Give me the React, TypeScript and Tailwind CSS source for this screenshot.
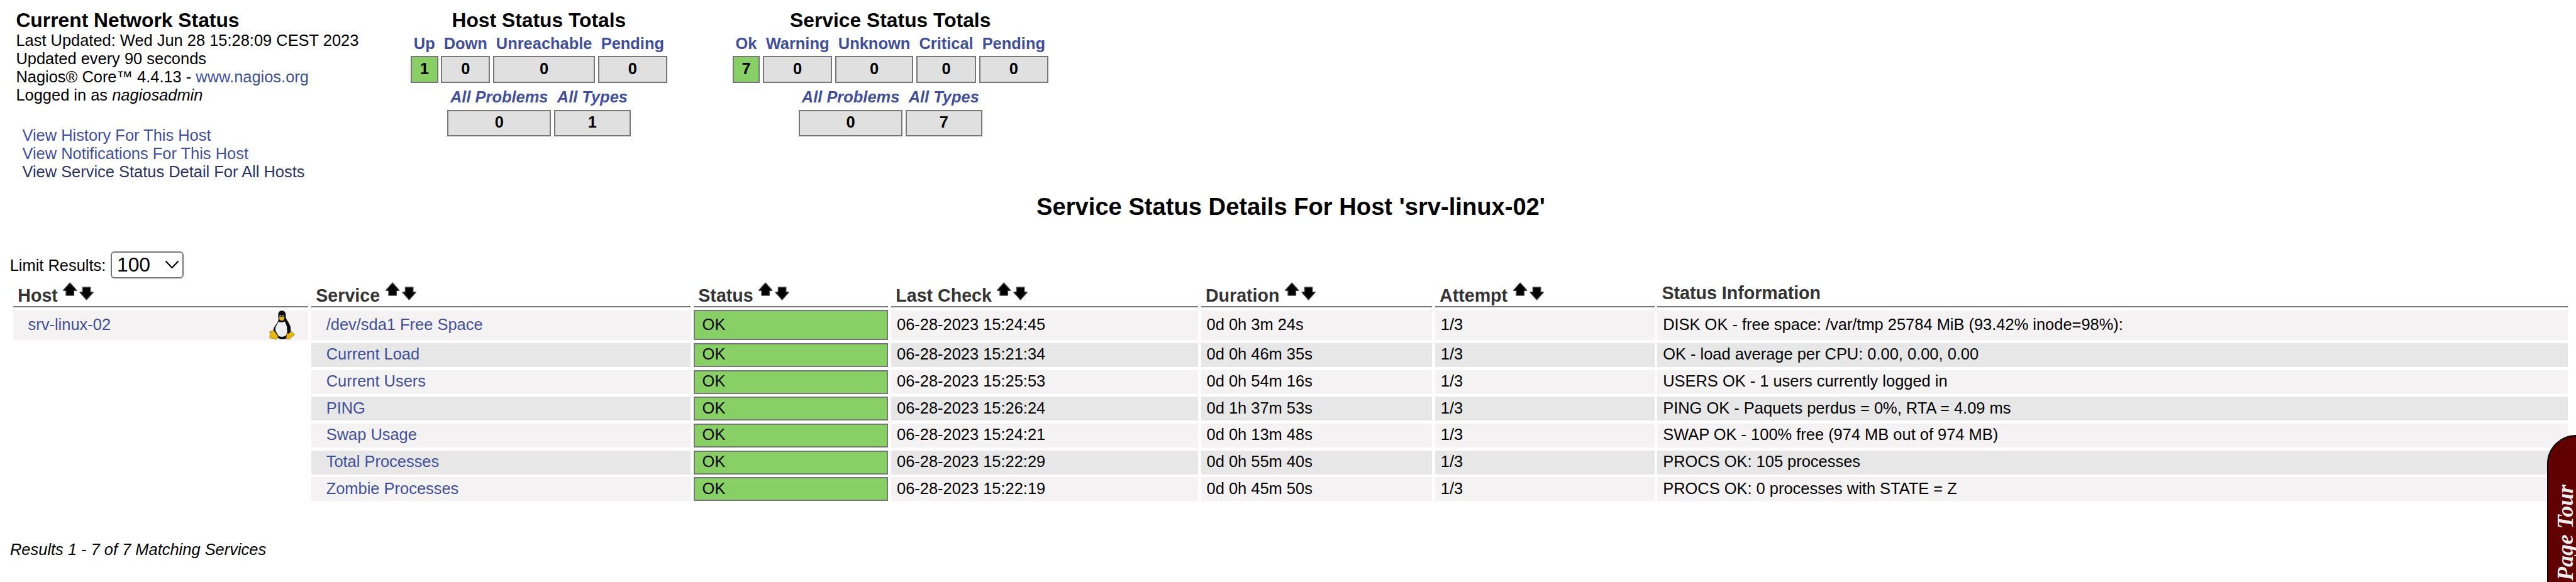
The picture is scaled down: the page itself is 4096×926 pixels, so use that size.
import React from "react";

type Total = { label: string; value: string; width: string; ok?: boolean };

const hostTotals: Total[] = [
  { label: "Up", value: "1", width: "w-[43.6px]", ok: true },
  { label: "Down", value: "0", width: "w-[78.2px]" },
  { label: "Unreachable", value: "0", width: "w-[162.4px]" },
  { label: "Pending", value: "0", width: "w-[109.8px]" },
];
const serviceTotals: Total[] = [
  { label: "Ok", value: "7", width: "w-[43.6px]", ok: true },
  { label: "Warning", value: "0", width: "w-[110.3px]" },
  { label: "Unknown", value: "0", width: "w-[124.4px]" },
  { label: "Critical", value: "0", width: "w-[95.5px]" },
  { label: "Pending", value: "0", width: "w-[109.8px]" },
];
const sums = (types: string): Total[] => [
  { label: "All Problems", value: "0", width: "w-[165.4px]" },
  { label: "All Types", value: types, width: "w-[121.7px]" },
];

const columns = [
  { label: "Host", sortable: true },
  { label: "Service", sortable: true },
  { label: "Status", sortable: true },
  { label: "Last Check", sortable: true },
  { label: "Duration", sortable: true },
  { label: "Attempt", sortable: true },
  { label: "Status Information", sortable: false },
];

const services = [
  ["/dev/sda1 Free Space", "06-28-2023 15:24:45", "0d 0h 3m 24s", "DISK OK - free space: /var/tmp 25784 MiB (93.42% inode=98%):"],
  ["Current Load", "06-28-2023 15:21:34", "0d 0h 46m 35s", "OK - load average per CPU: 0.00, 0.00, 0.00"],
  ["Current Users", "06-28-2023 15:25:53", "0d 0h 54m 16s", "USERS OK - 1 users currently logged in"],
  ["PING", "06-28-2023 15:26:24", "0d 1h 37m 53s", "PING OK - Paquets perdus = 0%, RTA = 4.09 ms"],
  ["Swap Usage", "06-28-2023 15:24:21", "0d 0h 13m 48s", "SWAP OK - 100% free (974 MB out of 974 MB)"],
  ["Total Processes", "06-28-2023 15:22:29", "0d 0h 55m 40s", "PROCS OK: 105 processes"],
  ["Zombie Processes", "06-28-2023 15:22:19", "0d 0h 45m 50s", "PROCS OK: 0 processes with STATE = Z"],
];

const GRID = "grid grid-cols-[474px_608px_314px_492.6px_372.2px_353.4px_1452.6px]";

function TotalsRow({ items, italic }: { items: Total[]; italic?: boolean }) {
  return (
    <div className="flex justify-center gap-[4.6px]">
      {items.map((t) => (
        <div key={t.label} className={`${t.width} flex flex-col items-center font-bold`}>
          <a className={italic ? "italic text-[#3f4f9c] leading-[28px] whitespace-nowrap" : "text-[#3f4f9c] leading-[28px] whitespace-nowrap"}>{t.label}</a>
          <div
            className={`${t.ok ? "bg-[#88d066]" : "bg-[#e0e0e0]"} ${italic ? "h-[42px]" : "h-[43px]"} mt-[6.4px] w-full border-2 border-[#777] flex items-center justify-center pb-[1.6px]`}
          >
            {t.value}
          </div>
        </div>
      ))}
    </div>
  );
}

function Totals({ title, items, types }: { title: string; items: Total[]; types: string }) {
  return (
    <div className="flex flex-col">
      <h2 className="text-center text-[31.8px] leading-[36px] font-bold">{title}</h2>
      <div className="h-[4.6px]" />
      <TotalsRow items={items} />
      <div className="h-[8.4px]" />
      <TotalsRow items={sums(types)} italic />
    </div>
  );
}

function SortArrows() {
  return (
    <svg className="ml-[8.5px] mb-[9px] h-[29px] w-[49px] shrink-0" viewBox="0 0 49 29">
      <path d="M11.2 1 L21.6 12.6 V13.4 H17.4 V21 H5 V13.4 H0.8 V12.6 Z" fill="#000" stroke="#4a4a4a" strokeWidth="1.4" strokeLinejoin="round" />
      <path d="M37.6 28 L48 16.4 V15.6 H43.8 V8 H31.4 V15.6 H27.2 V16.4 Z" fill="#000" stroke="#4a4a4a" strokeWidth="1.4" strokeLinejoin="round" />
    </svg>
  );
}

function Tux() {
  return (
    <svg className="h-[46.6px] w-[40.6px]" viewBox="18 14 134 154">
      <path d="M85 15 C96 15 104 23 105 36 C105 47 106 56 113 67 C122 80 132 96 131 113 C131 124 128 134 122 142 C118 155 110 164 92 164 C74 165 62 161 56 152 L40 126 C38 112 46 97 55 87 C61 78 67 67 67 57 C65 45 64 34 68 25 C71 18 77 15 85 15 Z" fill="#0c0c0c" />
      <path d="M67 72 C74 78 94 77 99 71 C106 83 112 95 112 113 C114 128 112 142 103 148 C91 154 77 154 67 148 L52 122 C48 108 53 96 60 87 Z" fill="#eeeeee" />
      <path d="M72 44 C72 36 79 35 82 43 L81 50 H74 Z M85 44 C86 35 95 36 96 44 L94 51 H86 Z" fill="#b8b8b8" />
      <path d="M75 43 h4 v6 h-4z M88 43 h4 v6 h-4z" fill="#111" />
      <path d="M69 53 C75 45 92 45 99 53 C97 63 89 69 82 68 C76 67 70 61 69 53 Z" fill="#e6b412" />
      <path d="M22 124 C31 126 32 119 41 121 C49 126 56 138 63 148 C66 158 60 166 50 165 C40 161 30 161 22 158 C18 155 23 148 23 142 C22 136 20 129 22 124 Z" fill="#e8b50c" stroke="#7a5a08" strokeWidth="2" />
      <path d="M111 131 C115 139 124 138 132 122 C139 125 139 134 150 139 C153 144 143 149 134 155 C127 163 118 168 110 164 C105 158 111 148 111 131 Z" fill="#e8b50c" stroke="#7a5a08" strokeWidth="2" />
    </svg>
  );
}

export default function App() {
  return (
    <div className="relative flex h-[926px] w-[4096px] flex-col overflow-hidden bg-white font-['Liberation_Sans',Arial,sans-serif] text-[25.44px] leading-[29.07px] text-black">
      <header className="flex h-[300px] shrink-0 pt-[14px]">
        <div className="w-[653px] pl-[25.4px]">
          <h2 className="text-[31.8px] leading-[36px] font-bold">Current Network Status</h2>
          <div>Last Updated: Wed Jun 28 15:28:09 CEST 2023</div>
          <div>Updated every 90 seconds</div>
          <div>
            Nagios® Core™ 4.4.13 - <a className="text-[#3f4f9c]">www.nagios.org</a>
          </div>
          <div>
            Logged in as <i>nagiosadmin</i>
          </div>
          <nav className="mt-[34.3px] flex flex-col pl-[10px] text-[#3f4f9c]">
            <a>View History For This Host</a>
            <a>View Notifications For This Host</a>
            <a className="text-[#2b3266]">View Service Status Detail For All Hosts</a>
          </nav>
        </div>
        <Totals title="Host Status Totals" items={hostTotals} types="1" />
        <div className="w-[104px]" />
        <Totals title="Service Status Totals" items={serviceTotals} types="7" />
      </header>

      <h1 className="mt-[7px] pl-[9px] text-center text-[38.15px] leading-[44px] font-bold">Service Status Details For Host 'srv-linux-02'</h1>

      <div className="mt-[48.7px] flex h-[43px] items-start pl-[15px]">
        <span className="mt-[8px] w-[161px] pl-[0.7px] whitespace-nowrap">Limit Results:</span>
        <div className="flex h-[43px] w-[116px] items-center justify-between rounded-[6px] border-2 border-[#767676] pr-[5px] pl-[8px] text-[31.8px]">
          <span>100</span>
          <svg className="h-[14px] w-[23px]" viewBox="0 0 23 14">
            <path d="M1.5 1.5 L11.5 12 L21.5 1.5" fill="none" stroke="#000" strokeWidth="2.2" />
          </svg>
        </div>
      </div>

      <section className="flex flex-col pl-[21px]">
        <div className={`${GRID} h-[46px] text-[28.6px] leading-[32px] font-bold text-[#333]`}>
          {columns.map((c) => (
            <div key={c.label} className="mr-[4.6px] flex items-end border-b-2 border-[#777] pl-[7.3px] whitespace-nowrap">
              <span className={c.sortable ? "mb-px" : "mb-[5px]"}>{c.label}</span>
              {c.sortable && <SortArrows />}
            </div>
          ))}
        </div>
        <div className="mt-[4.6px] flex flex-col gap-[4.54px]">
          {services.map(([name, check, duration, info], i) => {
            const bg = i % 2 ? "bg-[#e7e7e7]" : "bg-[#f4f2f2]";
            return (
              <div key={name} className={`${GRID} ${i ? "h-[38.15px]" : "h-[48.15px]"} whitespace-nowrap`}>
                {i === 0 ? (
                  <div className={`${bg} mr-[4.6px] flex items-center justify-between pr-[21.5px] pl-[23.6px]`}>
                    <a className="pb-[2px] text-[#3f4f9c]">srv-linux-02</a>
                    <Tux />
                  </div>
                ) : (
                  <div />
                )}
                <div className={`${bg} mr-[4.6px] flex items-center pb-[2.4px] pl-[23.7px] text-[#3f4f9c]`}>{name}</div>
                <div className="mr-[4.6px] flex items-center border-2 border-[#777] bg-[#88d066] pb-[2.4px] pl-[11.6px]">OK</div>
                <div className={`${bg} mr-[4.6px] flex items-center pb-[2.4px] pl-[9px]`}>{check}</div>
                <div className={`${bg} mr-[4.6px] flex items-center pb-[2.4px] pl-[9px]`}>{duration}</div>
                <div className={`${bg} mr-[4.6px] flex items-center pb-[2.4px] pl-[9px]`}>1/3</div>
                <div className={`${bg} mr-[4.6px] flex items-center pb-[2.4px] pl-[9px]`}>{info}</div>
              </div>
            );
          })}
        </div>
      </section>

      <footer className="mt-[62.4px] pl-[16px] italic">Results 1 - 7 of 7 Matching Services</footer>

      <div className="absolute top-[692px] left-[4050px] h-[320px] w-[120px] rounded-l-[46px] border-2 border-black bg-[#600000]">
        <span className="absolute top-[77px] left-[7px] rotate-180 font-['Liberation_Serif',serif] text-[35.8px] leading-[40px] font-bold whitespace-nowrap text-[#f2eef0] italic [writing-mode:vertical-rl]">
          Page Tour
        </span>
      </div>
    </div>
  );
}
